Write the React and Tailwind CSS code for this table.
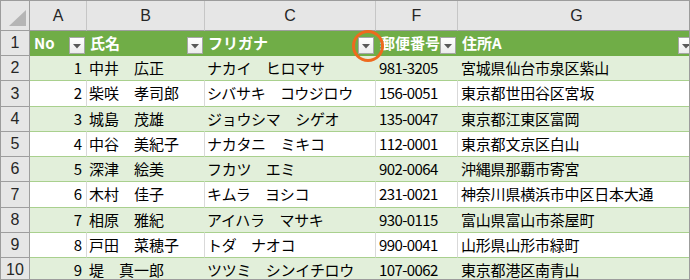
import React from "react";

// 住所録テーブル（Excel風）
const rows = [
  [1, "中井　広正", "ナカイ　ヒロマサ", "981-3205", "宮城県仙台市泉区紫山"],
  [2, "柴咲　孝司郎", "シバサキ　コウジロウ", "156-0051", "東京都世田谷区宮坂"],
  [3, "城島　茂雄", "ジョウシマ　シゲオ", "135-0047", "東京都江東区富岡"],
  [4, "中谷　美紀子", "ナカタニ　ミキコ", "112-0001", "東京都文京区白山"],
  [5, "深津　絵美", "フカツ　エミ", "902-0064", "沖縄県那覇市寄宮"],
  [6, "木村　佳子", "キムラ　ヨシコ", "231-0021", "神奈川県横浜市中区日本大通"],
  [7, "相原　雅紀", "アイハラ　マサキ", "930-0115", "富山県富山市茶屋町"],
  [8, "戸田　菜穂子", "トダ　ナオコ", "990-0041", "山形県山形市緑町"],
  [9, "堤　真一郎", "ツツミ　シンイチロウ", "107-0062", "東京都港区南青山"],
];

const heights = ["h-[25px]", "h-[26px]", "h-[25px]", "h-[25px]", "h-[25px]", "h-[26px]", "h-[25px]", "h-[25px]", "h-[25px]"];

const cols = [
  { letter: "A", w: "w-[57px]" },
  { letter: "B", w: "w-[118px]" },
  { letter: "C", w: "w-[171px]" },
  { letter: "F", w: "w-[82px]" },
  { letter: "G", w: "w-[238px]" },
];

const jp = { fontFamily: '"Noto Sans CJK JP", "Noto Sans", sans-serif' };
const hd = { fontFamily: '"Liberation Sans", "Noto Sans CJK JP", sans-serif' };

const FilterButton = () => (
  <div className="ml-auto mr-[2px] mb-[1px] self-end w-[16px] h-[17px] border border-[#a6a6a6] bg-gradient-to-b from-white to-[#ececec] flex items-center justify-center">
    <svg width="8" height="5" viewBox="0 0 8 5" className="mt-[2px]">
      <polygon points="0,0 8,0 4,4.5" fill="#595959" />
    </svg>
  </div>
);

const headers = [
  { label: "No", pad: "pl-[4px]" },
  { label: "氏名", pad: "pl-[3px]" },
  { label: "フリガナ", pad: "pl-[3px]" },
  { label: "郵便番号", pad: "pl-[4px]" },
  { label: "住所A", pad: "pl-[4px]" },
];

export default function App() {
  return (
    <div className="relative w-[690px] h-[280px] overflow-hidden border border-[#9c9c9c] bg-white text-black" style={jp}>
      <div className="w-[800px]">
        {/* 列見出し */}
        <div className="flex h-[30px]">
          <div className="w-[29px] shrink-0 bg-[#e6e6e6] border-r border-b border-[#9e9e9e]">
            <svg width="28" height="29" viewBox="0 0 28 29">
              <polygon points="25,9 25,25 8,25" fill="#b5b5b5" />
            </svg>
          </div>
          {cols.map((c) => (
            <div
              key={c.letter}
              className={`${c.w} shrink-0 bg-[#e6e6e6] border-r border-r-[#c6c6c6] border-b border-b-[#9e9e9e] flex items-center justify-center text-[16px] text-[#262626]`}
              style={hd}
            >
              {c.letter}
            </div>
          ))}
        </div>

        {/* テーブル見出し行 */}
        <div className="flex h-[25px]">
          <div className="w-[29px] shrink-0 bg-[#e6e6e6] border-r border-b border-[#9e9e9e] flex items-center justify-center text-[16px] text-[#262626]" style={hd}>
            1
          </div>
          {cols.map((c, i) => (
            <div
              key={c.letter}
              className={`${c.w} shrink-0 bg-[#70ad47] border-b border-[#70ad47] flex items-stretch ${headers[i].pad}`}
            >
              <span className="self-center text-white font-bold text-[15px] whitespace-nowrap">{headers[i].label}</span>
              <FilterButton />
            </div>
          ))}
        </div>

        {/* データ行 */}
        {rows.map((r, idx) => {
          const band = idx % 2 === 0;
          const cell = band
            ? "bg-[#e2efda] border-r border-r-[#e2efda]"
            : "bg-white border-r border-r-[#d9d9d9]";
          return (
            <div key={idx} className={`flex ${heights[idx]}`}>
              <div className="w-[29px] shrink-0 bg-[#e6e6e6] border-r border-b border-[#9e9e9e] flex items-center justify-center text-[16px] text-[#262626]" style={hd}>
                {idx + 2}
              </div>
              <div className={`w-[57px] shrink-0 ${cell} border-b border-b-[#a9d08e] flex items-center justify-end pr-[4px] text-[15px]`}>
                {r[0]}
              </div>
              <div className={`w-[118px] shrink-0 ${cell} border-b border-b-[#a9d08e] flex items-center pl-[2px] text-[15px] whitespace-nowrap`}>
                {r[1]}
              </div>
              <div className={`w-[171px] shrink-0 ${cell} border-b border-b-[#a9d08e] flex items-center pl-[2px] text-[15px] tracking-[-0.3px] whitespace-nowrap`}>
                {r[2]}
              </div>
              <div className={`w-[82px] shrink-0 ${cell} border-b border-b-[#a9d08e] flex items-center pl-[3px] text-[15px] tracking-[-0.6px] whitespace-nowrap`}>
                {r[3]}
              </div>
              <div className={`w-[238px] shrink-0 ${cell} border-b border-b-[#a9d08e] flex items-center pl-[3px] text-[15px] tracking-[-0.2px] whitespace-nowrap`}>
                {r[4]}
              </div>
            </div>
          );
        })}
      </div>

      {/* 注目マーク */}
      <div className="absolute left-[351px] top-[29px] w-[32px] h-[32px] rounded-full border-[3px] border-[#ee6a1e]" />
    </div>
  );
}
